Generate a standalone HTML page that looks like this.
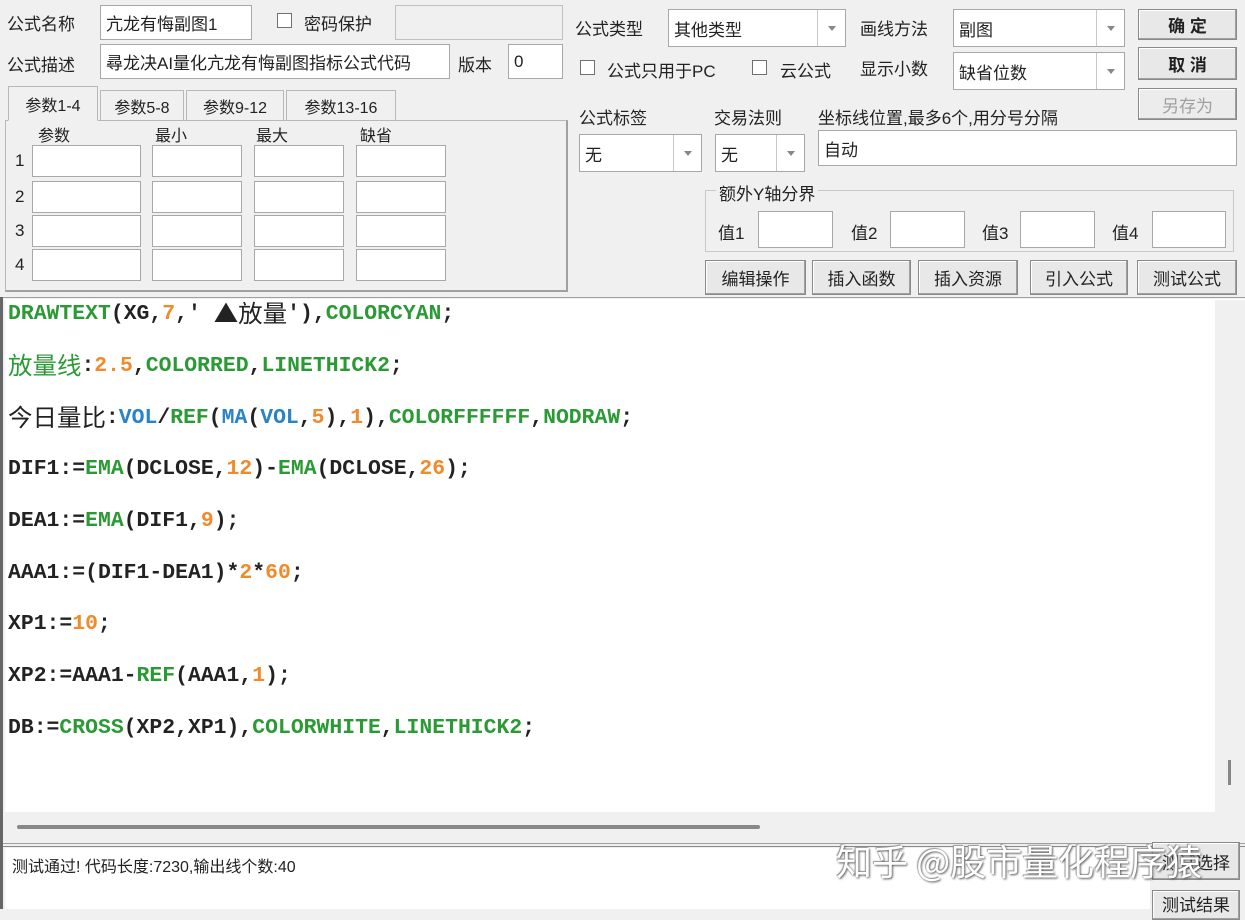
<!DOCTYPE html>
<html><head><meta charset="utf-8"><style>
*{box-sizing:border-box;margin:0;padding:0}
body{width:1245px;height:909px;background:#f0f0f0;position:relative;overflow:hidden;font-family:"Liberation Sans","Noto Sans CJK SC",sans-serif;font-size:17px;color:#222}
.a{position:absolute;white-space:nowrap}
.in{position:absolute;background:#fff;border:1px solid #a8a8a8;padding-left:5px;display:flex;align-items:center}
.dis{background:#f0f0f0;border-color:#c0c0c0}
.cb{position:absolute;width:15px;height:15px;border:1px solid #707070;background:#fff}
.dd{position:absolute;top:0;bottom:0;width:28px;right:0;border-left:1px solid #c8c8c8}
.dd:after{content:"";position:absolute;left:10px;top:50%;margin-top:-2px;border:4px solid transparent;border-top:5px solid #888}
.btn{position:absolute;background:#e8e8e8;border:1px solid #8a8a8a;box-shadow:inset -1px -1px 0 #a0a0a0,inset 1px 1px 0 #fff;display:flex;align-items:center;justify-content:center}
.tab{position:absolute;top:90px;height:30px;border:1px solid #b8b8b8;border-bottom:none;display:flex;align-items:center;justify-content:center;font-size:16px}
.code{position:absolute;left:5px;top:300px;width:1210px;height:512px;background:#fff}
.ln{position:absolute;left:3px;height:26px;line-height:26px;font-family:"Liberation Mono","Noto Sans CJK SC",monospace;font-weight:bold;font-size:21px;white-space:pre;transform:scaleX(1.02);transform-origin:left}
.g{color:#2a9a34}.o{color:#f08a2a}.b{color:#2a82c8}.k{color:#222}
.cj{font-family:"Noto Sans CJK SC",sans-serif;font-weight:normal;font-size:24px;line-height:26px;vertical-align:top;position:relative;top:-3px}
</style></head><body>
<div class="a" style="left:7px;top:10px">公式名称</div>
<div class="in" style="left:100px;top:5px;width:152px;height:35px">亢龙有悔副图1</div>
<div class="cb" style="left:277px;top:13px"></div>
<div class="a" style="left:304px;top:10px">密码保护</div>
<div class="in dis" style="left:395px;top:5px;width:168px;height:35px"></div>
<div class="a" style="left:7px;top:51px">公式描述</div>
<div class="in" style="left:100px;top:44px;width:350px;height:35px;overflow:hidden">尋龙决AI量化亢龙有悔副图指标公式代码</div>
<div class="a" style="left:458px;top:51px">版本</div>
<div class="in" style="left:508px;top:44px;width:55px;height:35px">0</div>

<div class="a" style="left:5px;top:120px;width:563px;height:172px;border:1px solid #b8b8b8;border-right:2px solid #a0a0a0;border-bottom:2px solid #a0a0a0"></div>
<div class="tab" style="left:8px;top:86px;width:90px;height:35px;background:#f0f0f0;border-bottom:1px solid #f0f0f0;z-index:2">参数1-4</div>
<div class="tab" style="left:100px;width:84px">参数5-8</div>
<div class="tab" style="left:186px;width:98px">参数9-12</div>
<div class="tab" style="left:286px;width:110px">参数13-16</div>
<div class="a" style="left:38px;top:122px;font-size:16px">参数</div>
<div class="a" style="left:155px;top:122px;font-size:16px">最小</div>
<div class="a" style="left:256px;top:122px;font-size:16px">最大</div>
<div class="a" style="left:360px;top:122px;font-size:16px">缺省</div>
<div class="a" style="left:15px;top:151px">1</div><div class="a" style="left:15px;top:187px">2</div><div class="a" style="left:15px;top:221px">3</div><div class="a" style="left:15px;top:255px">4</div>
<div class="in" style="left:32px;top:145px;width:109px;height:32px"></div><div class="in" style="left:152px;top:145px;width:90px;height:32px"></div><div class="in" style="left:254px;top:145px;width:90px;height:32px"></div><div class="in" style="left:356px;top:145px;width:90px;height:32px"></div>
<div class="in" style="left:32px;top:181px;width:109px;height:32px"></div><div class="in" style="left:152px;top:181px;width:90px;height:32px"></div><div class="in" style="left:254px;top:181px;width:90px;height:32px"></div><div class="in" style="left:356px;top:181px;width:90px;height:32px"></div>
<div class="in" style="left:32px;top:215px;width:109px;height:32px"></div><div class="in" style="left:152px;top:215px;width:90px;height:32px"></div><div class="in" style="left:254px;top:215px;width:90px;height:32px"></div><div class="in" style="left:356px;top:215px;width:90px;height:32px"></div>
<div class="in" style="left:32px;top:249px;width:109px;height:32px"></div><div class="in" style="left:152px;top:249px;width:90px;height:32px"></div><div class="in" style="left:254px;top:249px;width:90px;height:32px"></div><div class="in" style="left:356px;top:249px;width:90px;height:32px"></div>

<div class="a" style="left:575px;top:15px">公式类型</div>
<div class="in" style="left:668px;top:9px;width:178px;height:38px">其他类型<div class="dd"></div></div>
<div class="a" style="left:860px;top:15px">画线方法</div>
<div class="in" style="left:953px;top:9px;width:172px;height:38px">副图<div class="dd"></div></div>
<div class="btn" style="left:1138px;top:9px;width:99px;height:31px;font-weight:bold">确 定</div>
<div class="btn" style="left:1138px;top:47px;width:99px;height:33px;font-weight:bold">取 消</div>
<div class="btn" style="left:1138px;top:88px;width:99px;height:32px;color:#a0a0a0;background:#ececec">另存为</div>
<div class="cb" style="left:580px;top:60px"></div>
<div class="a" style="left:607px;top:57px">公式只用于PC</div>
<div class="cb" style="left:752px;top:60px"></div>
<div class="a" style="left:780px;top:57px">云公式</div>
<div class="a" style="left:860px;top:55px">显示小数</div>
<div class="in" style="left:953px;top:52px;width:172px;height:38px">缺省位数<div class="dd"></div></div>
<div class="a" style="left:579px;top:104px">公式标签</div>
<div class="a" style="left:714px;top:104px">交易法则</div>
<div class="a" style="left:818px;top:104px">坐标线位置,最多6个,用分号分隔</div>
<div class="in" style="left:579px;top:134px;width:123px;height:38px">无<div class="dd"></div></div>
<div class="in" style="left:715px;top:134px;width:90px;height:38px">无<div class="dd"></div></div>
<div class="in" style="left:818px;top:130px;width:419px;height:36px">自动</div>
<div class="a" style="left:705px;top:190px;width:529px;height:62px;border:1px solid #c8c8c8"></div>
<div class="a" style="left:716px;top:180px;background:#f0f0f0;padding:0 3px">额外Y轴分界</div>
<div class="a" style="left:718px;top:219px">值1</div><div class="in" style="left:758px;top:211px;width:75px;height:37px"></div>
<div class="a" style="left:851px;top:219px">值2</div><div class="in" style="left:890px;top:211px;width:75px;height:37px"></div>
<div class="a" style="left:982px;top:219px">值3</div><div class="in" style="left:1020px;top:211px;width:75px;height:37px"></div>
<div class="a" style="left:1112px;top:219px">值4</div><div class="in" style="left:1152px;top:211px;width:74px;height:37px"></div>
<div class="btn" style="left:705px;top:260px;width:101px;height:35px">编辑操作</div>
<div class="btn" style="left:812px;top:260px;width:99px;height:35px">插入函数</div>
<div class="btn" style="left:918px;top:260px;width:100px;height:35px">插入资源</div>
<div class="btn" style="left:1030px;top:260px;width:98px;height:35px">引入公式</div>
<div class="btn" style="left:1137px;top:260px;width:100px;height:35px">测试公式</div>

<div class="a" style="left:0;top:297px;width:1245px;height:3px;border-top:1px solid #a0a0a0;border-bottom:1px solid #fff"></div>
<div class="a" style="left:0;top:297px;width:3px;height:612px;background:#666"></div>
<div class="code">
<div class="ln g" style="top:2px">DRAWTEXT<span class="k">(XG,</span><span class="o">7</span><span class="k">,' <span class="cj">▲放量</span>'),</span>COLORCYAN<span class="k">;</span></div>
<div class="ln" style="top:54px"><span class="cj g">放量线</span><span class="k">:</span><span class="o">2.5</span><span class="k">,</span><span class="g">COLORRED</span><span class="k">,</span><span class="g">LINETHICK2</span><span class="k">;</span></div>
<div class="ln" style="top:106px"><span class="cj k">今日量比</span><span class="k">:</span><span class="b">VOL</span><span class="k">/</span><span class="g">REF</span><span class="k">(</span><span class="b">MA</span><span class="k">(</span><span class="b">VOL</span><span class="k">,</span><span class="o">5</span><span class="k">),</span><span class="o">1</span><span class="k">),</span><span class="g">COLORFFFFFF</span><span class="k">,</span><span class="g">NODRAW</span><span class="k">;</span></div>
<div class="ln k" style="top:157px">DIF1:=<span class="g">EMA</span>(DCLOSE,<span class="o">12</span>)-<span class="g">EMA</span>(DCLOSE,<span class="o">26</span>);</div>
<div class="ln k" style="top:209px">DEA1:=<span class="g">EMA</span>(DIF1,<span class="o">9</span>);</div>
<div class="ln k" style="top:261px">AAA1:=(DIF1-DEA1)*<span class="o">2</span>*<span class="o">60</span>;</div>
<div class="ln k" style="top:312px">XP1:=<span class="o">10</span>;</div>
<div class="ln k" style="top:364px">XP2:=AAA1-<span class="g">REF</span>(AAA1,<span class="o">1</span>);</div>
<div class="ln k" style="top:416px">DB:=<span class="g">CROSS</span>(XP2,XP1),<span class="g">COLORWHITE</span>,<span class="g">LINETHICK2</span>;</div>
</div>
<div class="a" style="left:1228px;top:760px;width:3px;height:25px;background:#888"></div>
<div class="a" style="left:17px;top:825px;width:743px;height:4px;background:#888;border-radius:2px"></div>
<div class="a" style="left:3px;top:843px;width:1242px;height:4px;border-top:1px solid #a0a0a0;border-bottom:1px solid #888"></div>
<div class="a" style="left:5px;top:848px;width:1145px;height:61px;background:#fff"></div>
<div class="a" style="left:12px;top:853px;font-size:16px">测试通过! 代码长度:7230,输出线个数:40</div>
<div class="btn" style="left:1152px;top:842px;width:88px;height:38px">测试选择</div>
<div class="btn" style="left:1152px;top:890px;width:88px;height:30px;align-items:flex-start">测试结果</div>
<div class="a" style="left:836px;top:834px;font-size:36px;color:#fff;text-shadow:1px 1px 2px #555,-1px -1px 1px #999;font-family:'Noto Sans CJK SC',sans-serif">知乎 @股市量化程序猿</div>
</body></html>
